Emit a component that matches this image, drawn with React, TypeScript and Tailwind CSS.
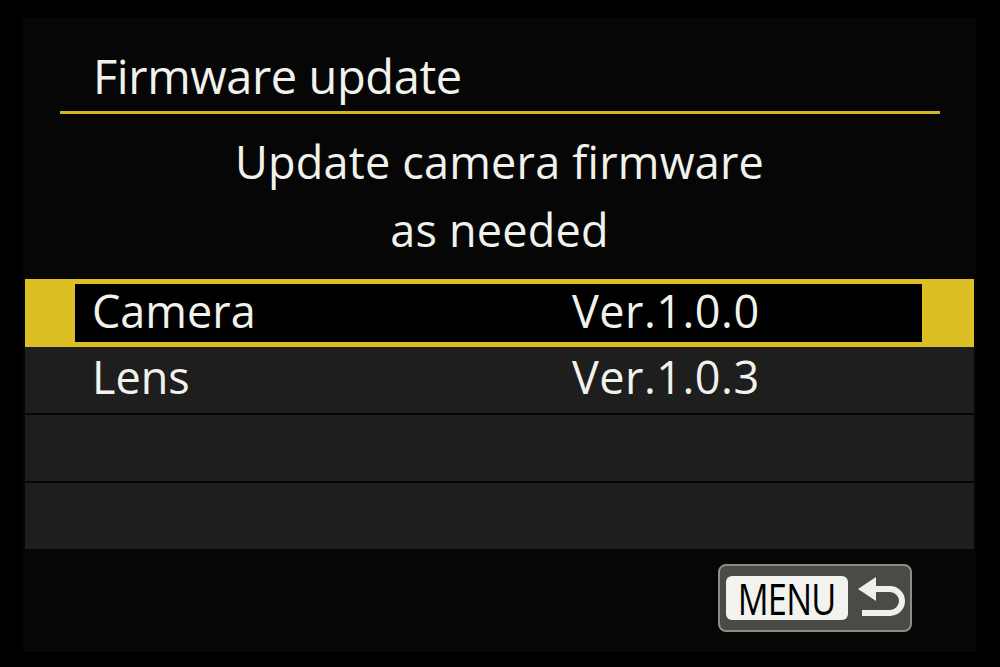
import { ReactNode } from 'react'

const font = { fontFamily: '"Open Sans", "Noto Sans", sans-serif' }

function Row({ label, value, selected }: { label?: string; value?: string; selected?: boolean }) {
  if (selected) {
    return (
      <div className="h-[68px] bg-[#dcbf22] pl-[50px] pr-[52px] py-[5px]">
        <div className="h-full bg-black flex items-center pl-[17px] pb-[6px] text-[45px] leading-none text-[#f2f2ec]">
          <span className="w-[480px]">{label}</span>
          <span className="tracking-[0.5px]">{value}</span>
        </div>
      </div>
    )
  }
  return (
    <div className="h-[66px] bg-[#1e1e1e] flex items-center pl-[67px] pb-[8px] text-[45px] leading-none text-[#f2f2ec]">
      {label && <span className="w-[480px]">{label}</span>}
      {value && <span className="tracking-[0.5px]">{value}</span>}
    </div>
  )
}

function Line({ children }: { children: ReactNode }) {
  return <div className="text-center">{children}</div>
}

function ReturnArrow() {
  return (
    <svg width="52" height="42" viewBox="0 0 52 42" className="ml-[8px]">
      <path d="M2 12 L20 0 L20 24 Z" fill="#f0f0ea" />
      <path d="M18 12 H34 A12 12 0 0 1 34 36 H6" fill="none" stroke="#f0f0ea" strokeWidth="6" />
    </svg>
  )
}

export default function App() {
  return (
    <div className="w-full h-[667px] bg-black pt-[18px] pl-[23px]" style={font}>
      <div className="w-[953px] h-[634px] bg-[#060606] flex flex-col">
        <div className="pt-[30px] pl-[70px] text-[47px] leading-[56px] tracking-[-0.4px] text-[#f2f2ec]">
          Firmware update
        </div>
        <div className="mt-[7px] ml-[37px] w-[880px] h-[3px] bg-[#d4b61f]" />

        <div className="mt-[14px] text-[45px] leading-[68px] tracking-[0.2px] text-[#f2f2ec]">
          <Line>Update camera firmware</Line>
          <Line>as needed</Line>
        </div>

        <div className="mt-[15px] mx-[2px] flex flex-col">
          <Row selected label="Camera" value="Ver.1.0.0" />
          <Row label="Lens" value="Ver.1.0.3" />
          <div className="mt-[2px]">
            <Row />
          </div>
          <div className="mt-[2px]">
            <Row />
          </div>
        </div>

        <div className="mt-[15px] ml-auto mr-[64px] w-[194px] h-[68px] rounded-[8px] border-2 border-[#8e8e86] bg-[#4a4a46] flex items-center pl-[6px]">
          <div className="w-[122px] h-[44px] rounded-[6px] bg-[#f2f2ee] flex items-center justify-center">
            <span className="text-[44px] leading-none font-medium text-black scale-x-[0.78] tracking-[-1px]">MENU</span>
          </div>
          <ReturnArrow />
        </div>
      </div>
    </div>
  )
}
